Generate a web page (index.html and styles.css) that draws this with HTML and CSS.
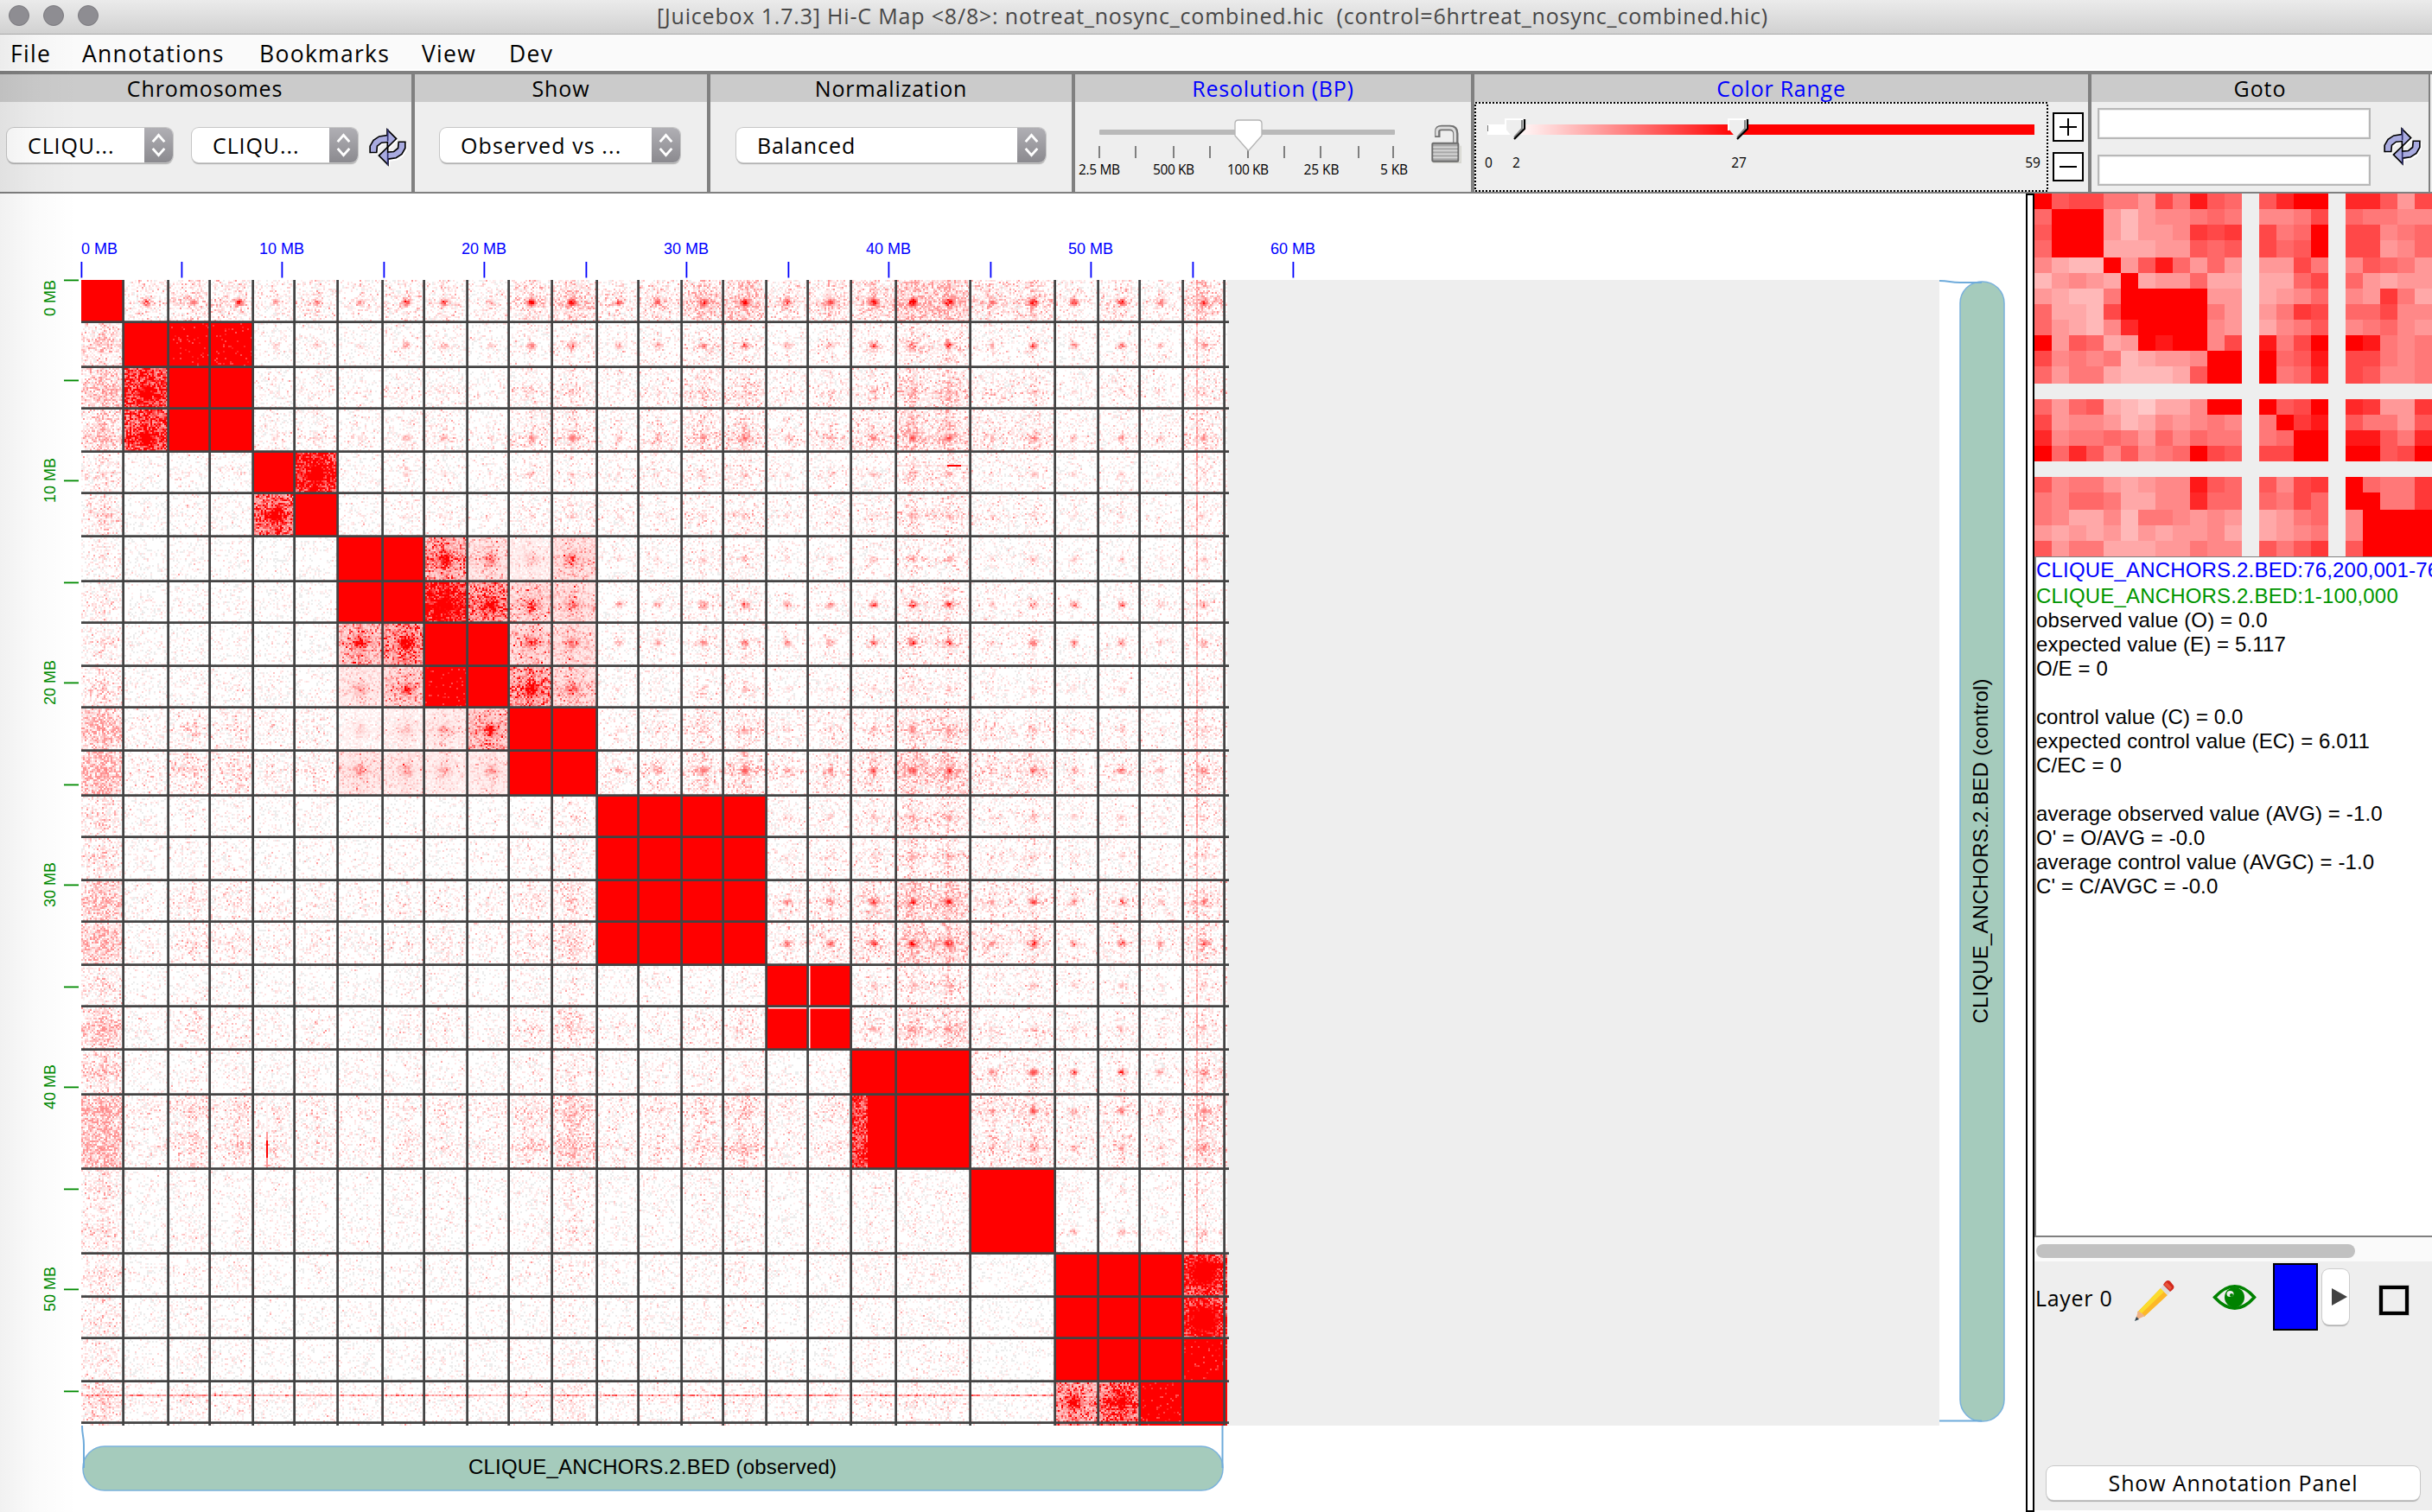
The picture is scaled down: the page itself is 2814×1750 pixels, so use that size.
FILE: index.html
```html
<!DOCTYPE html>
<html lang="en">
<head>
<meta charset="utf-8">
<title>[Juicebox 1.7.3] Hi-C Map</title>
<link rel="stylesheet" href="styles.css">
</head>
<body>
<svg class="defs" width="0" height="0">
  <symbol id="refresh" viewBox="20 20 138 136">
    <g fill="#fff"><path d="M31 113V91L46 66 66 54 91 50V31L124 64 94 94V76L71 78 56 91 54 113z"/><path d="M156 74V96L141 121 121 133 96 137V156L63 123 93 93V111L116 109 131 96 133 74z"/></g>
    <g fill="#a9abe0" stroke="#000" stroke-width="5">
      <path d="M26 106V84L38 63 58 50 86 46V26L118 58 87 88V70L66 72 51 84 49 106z"/>
      <path d="M149 69V91L137 112 117 125 89 129V149L57 117 88 87V105L109 103 124 91 126 69z"/>
    </g>
    <path d="M88 24V66M88 108V151" stroke="#2e2f6e" stroke-width="5"/>
  </symbol>
  <symbol id="updown" viewBox="0 0 34 40"><path d="M10 16l7-8 7 8M10 24l7 8 7-8" fill="none" stroke="#fff" stroke-width="3"/></symbol>
</svg>
<div class="window">
  <header class="titlebar">
    <div class="lights"><i></i><i></i><i></i></div>
    <span class="caption">[Juicebox 1.7.3] Hi-C Map &lt;8/8&gt;: notreat_nosync_combined.hic&nbsp; (control=6hrtreat_nosync_combined.hic)</span>
  </header>
  <nav class="menu"><span>File</span><span>Annotations</span><span>Bookmarks</span><span>View</span><span>Dev</span></nav>
  <div class="toolbar">
    <section class="group g-chrom">
      <h2>Chromosomes</h2>
      <div class="body">
        <div class="combo"><span>CLIQU...</span><b><svg><use href="#updown"/></svg></b></div>
        <div class="combo"><span>CLIQU...</span><b><svg><use href="#updown"/></svg></b></div>
        <svg class="refresh"><use href="#refresh"/></svg>
      </div>
    </section>
    <section class="group g-show">
      <h2>Show</h2>
      <div class="body"><div class="combo"><span>Observed vs ...</span><b><svg><use href="#updown"/></svg></b></div></div>
    </section>
    <section class="group g-norm">
      <h2>Normalization</h2>
      <div class="body"><div class="combo"><span>Balanced</span><b><svg><use href="#updown"/></svg></b></div></div>
    </section>
    <section class="group g-res">
      <h2 class="link">Resolution (BP)</h2>
      <div class="body">
        <svg class="res-slider" width="396" height="104" viewBox="0 0 396 104">
          <rect x="28" y="32" width="342" height="6" rx="1" fill="#b9b9b9"/>
          <path d="M28 51v14M70 51v14M114 51v14M156 51v14M200 51v14M242 51v14M284 51v14M328 51v14M368 51v14" stroke="#808080" stroke-width="2"/>
          <path d="M185 25q0-4 4-4h23q4 0 4 4v14l-15 17h-1l-15-17z" fill="#fff" stroke="#b4b4b4" stroke-width="1.3"/>
          <g class="tick-text"><text x="28" y="84" textLength="48">2.5 MB</text><text x="114" y="84" textLength="48">500 KB</text><text x="200" y="84" textLength="48">100 KB</text><text x="285" y="84" textLength="41">25 KB</text><text x="369" y="84" textLength="32">5 KB</text></g>
        </svg>
        <svg class="lock" width="36" height="48" viewBox="44 104 108 144">
          <path d="M54 236H150V178" fill="none" stroke="#d6d6d0" stroke-width="6"/>
          <path d="M69 149V128Q69 116 84 116H112Q132 116 132 136V168" fill="none" stroke="#707070" stroke-width="19"/>
          <path d="M69 144V128Q69 116 84 116H112Q132 116 132 136V168" transform="translate(-2 0)" fill="none" stroke="#dcdcdc" stroke-width="9"/>
          <rect x="51" y="169" width="90" height="63" rx="3" fill="#a8a8a8" stroke="#6c6c6c" stroke-width="6"/>
          <path d="M54 183H138M54 195H138M54 207H138M54 219H138" stroke="#d8d8d8" stroke-width="5"/>
        </svg>
      </div>
    </section>
    <section class="group g-color">
      <h2 class="link">Color Range</h2>
      <div class="body">
        <svg class="color-slider" width="664" height="104" viewBox="0 0 664 104">
          <defs><linearGradient id="ramp"><stop offset="0" stop-color="#fff"/><stop offset="1" stop-color="#f00"/></linearGradient></defs>
          <rect x="1" y="1" width="662" height="102" fill="none" stroke="#000" stroke-width="2" stroke-dasharray="2 2"/>
          <rect x="15" y="26" width="32" height="12" fill="#fff"/><path d="M15.500 27v7" stroke="#777"/>
          <rect x="46" y="26" width="258" height="12" fill="url(#ramp)"/><rect x="303" y="26" width="345" height="12" fill="#f00"/>
          <g id="thumb"><path d="M36 20H58V31L46 43 36 31z" fill="#eee"/><path d="M36 33V20H56" fill="none" stroke="#fff" stroke-width="2"/><path d="M55 21V31L46 41" fill="none" stroke="#888" stroke-width="2"/><path d="M58 20V31L46 43" fill="none" stroke="#000" stroke-width="2.200"/></g>
          <use href="#thumb" x="258"/>
          <g class="tick-text"><text x="16.500" y="76">0</text><text x="48.500" y="76">2</text><text x="306" y="76">27</text><text x="646" y="76">59</text></g>
        </svg>
        <div class="zoom">
          <svg width="36" height="34" viewBox="0 0 36 34"><rect x="1" y="1" width="34" height="32" fill="#fff" stroke="#000" stroke-width="2"/><path d="M18 7v20M8 17h20" stroke="#000" stroke-width="2"/></svg>
          <svg width="36" height="34" viewBox="0 0 36 34"><rect x="1" y="1" width="34" height="32" fill="#fff" stroke="#000" stroke-width="2"/><path d="M8 17h20" stroke="#000" stroke-width="2"/></svg>
        </div>
      </div>
    </section>
    <section class="group g-goto">
      <h2>Goto</h2>
      <div class="body">
        <div class="fields"><div class="field"></div><div class="field"></div></div>
        <svg class="refresh"><use href="#refresh"/></svg>
      </div>
    </section>
  </div>
  <main class="main">
    <div class="map-pane">
      <svg class="ruler-top" width="1526" height="100"></svg>
      <svg class="ruler-left" width="94" height="1326"></svg>
      <div class="map-bg"><canvas id="heatmap" width="1328" height="1326"></canvas></div>
      <svg class="track-right" width="100" height="1326" viewBox="0 0 100 1326">
        <rect x="24" y="2" width="51" height="1319" rx="25" fill="#a5cbbc" stroke="#79b1dc" stroke-width="1.500"/>
        <path d="M0 1C12 1 12 3 24 3H49M0 1320.500H49" fill="none" stroke="#6fabdb" stroke-width="2"/>
        <text transform="translate(56 661) rotate(-90)" textLength="399">CLIQUE_ANCHORS.2.BED (control)</text>
      </svg>
      <svg class="track-bottom" width="1330" height="100" viewBox="0 0 1330 100">
        <rect x="2" y="24" width="1319" height="51" rx="25" fill="#a5cbbc" stroke="#79b1dc" stroke-width="1.500"/>
        <path d="M1 0C1 12 3 12 3 22V49M1320.500 0V49" fill="none" stroke="#6fabdb" stroke-width="2"/>
        <text x="661" y="56" textLength="426">CLIQUE_ANCHORS.2.BED (observed)</text>
      </svg>
    </div>
    <div class="splitter"></div>
    <aside class="side">
      <div class="mini"><canvas id="minimap" width="460" height="420"></canvas></div>
      <div class="info">
        <p class="x">CLIQUE_ANCHORS.2.BED:76,200,001-76,300,000</p>
        <p class="y">CLIQUE_ANCHORS.2.BED:1-100,000</p>
        <p>observed value (O) = 0.0</p>
        <p>expected value (E) = 5.117</p>
        <p>O/E = 0</p>
        <p>&nbsp;</p>
        <p>control value (C) = 0.0</p>
        <p>expected control value (EC) = 6.011</p>
        <p>C/EC = 0</p>
        <p>&nbsp;</p>
        <p>average observed value (AVG) = -1.0</p>
        <p>O' = O/AVG = -0.0</p>
        <p>average control value (AVGC) = -1.0</p>
        <p>C' = C/AVGC = -0.0</p>
      </div>
      <div class="scroll"><div class="scroll-thumb"></div></div>
      <div class="layer">
        <span class="layer-name">Layer 0</span>
        <svg class="pencil" width="48" height="50" viewBox="0 0 48 50">
          <path d="M4 39L31 11 39 19 12 44 9 40z" fill="#fdb827"/><path d="M4 39L31 11 35 15 8 41z" fill="#fbdc2c"/><path d="M5 37L13 43 2 48z" fill="#efb184"/><path d="M1 49l2-5 3 3z" fill="#2f4550"/>
          <path d="M31 11L35 6 43 14 39 19z" fill="#dcdcdc"/><path d="M34 7Q38 0 42 3L46 8Q48 11 42 15z" fill="#d2281c"/><path d="M35 7l3-3 6 6-2 3z" fill="#e8543c"/>
        </svg>
        <svg class="eye" width="52" height="36" viewBox="0 0 52 36">
          <path d="M2.500 17.500Q26-8 48.500 17.500 26 43 2.500 17.500z" fill="none" stroke="#008200" stroke-width="3.500"/><circle cx="25.500" cy="17.500" r="11.500" fill="#008200"/><ellipse cx="20.500" cy="13.500" rx="4" ry="3.500" fill="#eee"/><circle cx="22" cy="15" r="2" fill="#008200"/>
        </svg>
        <div class="swatch"></div>
        <div class="more"><svg width="18" height="20" viewBox="0 0 18 20"><path d="M0 0L18 10 0 20z" fill="#424242"/></svg></div>
        <div class="box"></div>
      </div>
      <button class="annot">Show Annotation Panel</button>
    </aside>
  </main>
</div>
<script src="app.js"></script>
</body>
</html>
```
FILE: styles.css
```css
* { box-sizing: border-box; margin: 0; padding: 0; }
body { width: 2814px; height: 1750px; overflow: hidden; background: #fff; color: #000; font-family: "Open Sans", "Noto Sans", sans-serif; }
.defs { position: absolute; }
svg, canvas { display: block; flex: none; }
.window { width: 2814px; height: 1750px; display: flex; flex-direction: column; }
.window::after { content: ""; position: absolute; left: 0; top: 40px; width: 90px; height: 1710px; background: linear-gradient(90deg, rgba(0,0,0,.055), rgba(0,0,0,.02) 45%, transparent); pointer-events: none; }

.titlebar { flex: none; height: 40px; display: flex; align-items: center; padding-left: 10px; background: linear-gradient(#ebebeb, #d1d1d1); border-bottom: 1px solid #a9a9a9; }
.lights { display: flex; gap: 16px; width: 750px; margin-top: -3px; }
.lights i { width: 24px; height: 24px; border-radius: 50%; background: #8e8d92; border: 1px solid #7b7a7f; }
.caption { margin-top: -3px; font-size: 25px; line-height: 36px; letter-spacing: .82px; color: #474747; white-space: pre; }

.menu { flex: none; height: 44px; padding-left: 12px; display: grid; grid-template-columns: 83px 205px 188px 101px auto; background: #fafafa; font-size: 26.500px; line-height: 44px; letter-spacing: 1.300px; border-bottom: 2px solid #808080; box-shadow: inset 0 -2px #fff; }

.toolbar { flex: none; height: 140px; display: flex; border-top: 2px solid #808080; border-bottom: 2px solid #808080; background: #eee; }
.group { display: flex; flex-direction: column; border-right: 4px solid #808080; }
.group h2 { height: 32px; background: #cbcbcb; text-align: center; font-size: 25px; font-weight: 400; line-height: 32px; letter-spacing: .9px; }
.group h2.link { color: #00f; letter-spacing: .75px; }
.body { height: 104px; display: flex; }
.g-chrom { width: 480px; }
.g-chrom h2 { padding-right: 2px; }
.g-show { width: 342px; }
.g-norm { width: 422px; }
.g-res { width: 462px; }
.g-color { width: 714px; }
.g-goto { width: 392px; border-right-width: 2px; }
.g-chrom .body { padding: 30px 0 0 8px; gap: 22px; }
.g-show .body { padding: 30px 0 0 29px; }
.g-norm .body { padding: 30px 0 0 30px; }
.combo { display: flex; height: 40px; border-radius: 8px; background: #fff; box-shadow: 0 0 0 1px #c6c6c6, 0 2px 1px #aaa; overflow: hidden; font-size: 25px; line-height: 40px; letter-spacing: .9px; }
.combo span { flex: 1; padding-left: 24px; white-space: nowrap; }
.combo b { width: 33px; background: linear-gradient(#b0afb4, #8b8a8f); }
.combo b svg { width: 33px; height: 40px; }
.g-chrom .combo { width: 192px; }
.g-show .combo { width: 278px; letter-spacing: 1.1px; }
.g-norm .combo { width: 358px; }
.refresh { width: 46px; height: 45px; }
.g-chrom .refresh { margin-left: -10px; }
.tick-text { font-size: 15.500px; text-anchor: middle; }
.g-res .lock { margin: 26px 0 0 15px; }
.zoom { display: flex; flex-direction: column; gap: 12px; padding: 12px 0 0 5px; }
.g-goto .body { padding-left: 7px; }
.fields { display: flex; flex-direction: column; gap: 18px; padding-top: 7px; }
.field { width: 316px; height: 36px; background: #fff; border: 2px solid #b8b8b8; box-shadow: inset 0 0 0 1px #eee; }
.g-goto .refresh { margin: 29px 0 0 14px; }

.main { flex: 1; display: flex; min-height: 0; }
.map-pane { width: 2344px; display: grid; grid-template: 100px 1326px 100px / 94px 2150px 100px; }
.ruler-top { grid-area: 1 / 2; fill: #00f; overflow: visible; }
.ruler-left { grid-area: 2 / 1; fill: #008a00; overflow: visible; }
.ruler-top text, .ruler-left text { font: 18px "Liberation Sans", sans-serif; text-anchor: middle; }
.map-bg { grid-area: 2 / 2; background: #eee; }
.track-right { grid-area: 2 / 3; }
.track-bottom { grid-area: 3 / 2; }
.track-right text, .track-bottom text { font: 24px "Liberation Sans", sans-serif; text-anchor: middle; }
.splitter { width: 10px; background: #fff; border: 2px solid #000; }
.side { width: 460px; height: 1524px; display: flex; flex-direction: column; background: #eee; }
.mini { height: 421px; border-bottom: 2px solid #808080; flex: none; }
.info { flex: none; height: 787px; overflow: hidden; background: #fff; border-left: 2px solid #808080; border-bottom: 2px solid #808080; font: 24px/28px "Liberation Sans", sans-serif; letter-spacing: .12px; white-space: nowrap; }
.info .x, .info .y { line-height: 29.500px; letter-spacing: .18px; }
.info .x { color: #00f; }
.info .y { color: #009600; }
.scroll { flex: none; height: 28px; padding: 8px 0 0 2px; background: #fafafa; }
.scroll-thumb { width: 369px; height: 16px; border-radius: 8px; background: #c1c1c1; }
.layer { flex: none; height: 84px; display: flex; padding-left: 1px; }
.layer-name { width: 114px; font-size: 25px; line-height: 84px; letter-spacing: .7px; }
.pencil { margin-top: 20px; }
.eye { margin: 24px 0 0 43px; }
.swatch { width: 52px; height: 78px; margin: 2px 0 0 18px; background: #00f; border: 2px solid #000; }
.more { width: 31px; height: 64px; margin: 9px 0 0 5px; padding: 22px 0 0 11px; border-radius: 8px; background: #fff; box-shadow: 0 0 0 1px #ccc, 0 2px 1px #aaa; }
.box { width: 34px; height: 34px; margin: 28px 0 0 35px; border: 4px solid #000; box-shadow: 0 0 0 1px #c8c8c8, inset 0 0 0 1px #ccc; }
.annot { flex: none; width: 432px; height: 39px; margin: 153px 0 0 14px; border: 0; border-radius: 8px; background: #fff; box-shadow: 0 0 0 1px #c8c8c8, 0 2px 1px #aaa; font: 25px/39px "Open Sans", sans-serif; letter-spacing: .85px; color: #000; }
```
FILE: app.js
```js
// Rulers
const NS = 'http://www.w3.org/2000/svg';
const ticks = [0, 116, 232, 350, 466, 584, 700, 818, 934, 1052, 1168, 1286, 1402];
function add(parent, name, attrs, text) {
  const el = document.createElementNS(NS, name);
  for (const k in attrs) el.setAttribute(k, attrs[k]);
  if (text) el.textContent = text;
  parent.appendChild(el);
}
const top_ = document.querySelector('.ruler-top');
const left_ = document.querySelector('.ruler-left');
ticks.forEach((t, i) => {
  add(top_, 'rect', { x: t - .5, y: 79, width: 1.8, height: 18.5 });
  if (t < 1326) add(left_, 'rect', { x: 74, y: t - .5, width: 17, height: 1.8 });
  if (i % 2) return;
  const label = i * 5 + ' MB';
  const c = i ? t : 21;
  add(top_, 'text', { x: c, y: 70 }, label);
  if (t < 1326) add(left_, 'text', { transform: `translate(64 ${c}) rotate(-90)` }, label);
});

// Contact map: 25 anchors, 2px bins
const edges = [0, 49, 101, 149, 199, 247, 297, 349, 397, 447, 495, 545, 597, 645, 695, 743, 793, 841, 891, 943, 1029, 1127, 1177, 1225, 1275, 1326];
const centers = [25, 75, 129, 182, 224, 272, 322, 375, 419, 473, 520, 567, 621, 666, 719, 767, 816, 866, 916, 961, 1101, 1148, 1203, 1248, 1298];
const upCol = [0, .4, .6, .6, .3, .4, .3, .45, .45, .3, .7, .85, .4, .6, .95, 1.1, .5, .7, .85, 1.45, .75, .4, .5, .35, .8];
const upRow = [1.3, .45, .65, .85, .4, .45, .3, .35, .4, .3, .6, .9, .5, .5, .9, .9, .45, .6, .75, 1.05, .4, .4, .3, .3, .3];
const spotCol = [0, 1, .5, .9, .4, .5, .4, .9, .8, .4, 1.1, 1.3, .7, .7, .9, 1.2, .8, .8, 1.2, 1.5, 1.3, .9, 1.1, .5, .9];
const spotRow = [1.7, 1, .2, .7, .35, .25, .45, 1.2, 1, .3, .35, .9, .35, .3, 1, 1.2, .35, .4, 1.3, .8, .6, .3, .3, .3, .3];
const loCol = [2.3, .35, .7, .65, .4, .4, .3, .4, .45, .35, .7, 1.15, .4, .5, .7, .85, .35, .5, .8, .9, .15, .3, .3, .3, .3];
const loRow = [0, .4, .6, .5, .25, .3, .15, .2, .2, .3, .75, .95, .3, .3, .65, .7, .25, .55, .4, .95, .3, .25, .2, .2, .4];
const solid = {};
const fill = (a, b) => { for (let r = a; r <= b; r++) for (let c = a; c <= b; c++) solid[r + ',' + c] = 9; };
fill(0, 0); fill(1, 3); fill(4, 5); fill(6, 9); fill(10, 11); fill(12, 15); fill(16, 17); fill(18, 19); fill(20, 20); fill(21, 24);
// Blocks with partial coverage: mean level inside the block
Object.assign(solid, {
  '1,2': 2, '1,3': 2.2, '2,1': .95, '3,1': .85, '4,5': 1.2, '5,4': .7,
  '6,8': .42, '6,9': .16, '7,8': 1.2, '7,9': .55, '8,6': .32, '8,7': .5, '9,8': 2.2, '9,6': .11, '9,7': .24,
  '21,24': 1, '22,24': 1.1, '23,24': 4, '24,21': .45, '24,22': .7, '24,23': 2,
  '6,10': .08, '6,11': .18, '7,10': .22, '7,11': .17, '8,10': .22, '8,11': .16, '9,10': .46, '9,11': .2, '10,9': .3,
  '10,6': .05, '10,7': .07, '10,8': .1, '11,6': .13, '11,7': .11, '11,8': .09, '11,9': .1
});
let seed = 20177;
function rnd() {
  seed = (seed + 0x6D2B79F5) | 0;
  let t = Math.imul(seed ^ (seed >>> 15), 1 | seed);
  t = (t + Math.imul(t ^ (t >>> 7), 61 | t)) ^ t;
  return ((t ^ (t >>> 14)) >>> 0) / 4294967296;
}
const index = p => { let i = 0; while (i < 24 && p >= edges[i + 1]) i++; return i; };
const ctx = document.getElementById('heatmap').getContext('2d');
ctx.fillStyle = '#fff';
ctx.fillRect(0, 0, 1326, 1326);
function dist(p, i) {
  let d = Math.abs(p - centers[i]);
  if (i === 19) d = Math.min(d, Math.abs(p - 1003));
  if (i === 20) d = Math.min(d, Math.abs(p - 1053) + 3);
  return d;
}
for (let y = 0; y < 1326; y += 2) {
  const r = index(y + 1);
  for (let x = 0; x < 1326; x += 2) {
    const c = index(x + 1);
    const dx = dist(x, c), dy = dist(y, r);
    const cross = Math.exp(-dx / 8) + Math.exp(-dy / 8);
    const a = 1 - rnd(), b = 1 - rnd();
    let level = solid[r + ',' + c];
    let v;
    if (level === 9) v = 1;
    else if (level >= 2) v = b < .07 ? .65 + .25 * a : 1;
    else if (level !== undefined) {
      level *= .75 + .45 * cross;
      v = level * (.4 + .65 * -Math.log(a));
      v += Math.min(1, level * 2) * Math.exp(-(dx * dx / 45 + dy * dy / 40)) * (.2 + b);
      if (c === 24) v += .8 * Math.max(0, 1 - Math.max(dx, dy) / 20);
    } else {
      const up = c > r;
      level = (up ? upCol[c] * upRow[r] : loCol[c] * loRow[r]) * (.5 + .8 * cross);
      const p = Math.min(.85, .08 + .5 * level);
      v = b < p ? .05 + (.045 + .14 * level) * -Math.log(a) * .8 : 0;
      v = Math.min(v, .42);
      const s = up ? spotCol[c] * spotRow[r] : loCol[c] * loRow[r] * .14;
      v += s * .62 * Math.exp(-(dx * dx / 18 + dy * dy / 13)) * (.15 + 1.1 * a);
    }
    if (r === 19 && c === 18 && x < 909) v = .35 + a * .8;
    if (r === 15 && c === 12 && y > 825 && x < 622) v = .55 + a * 1.6;
    if (x === 1290 && r < 21) v = Math.max(v, .15 + .3 * a);
    if (y === 1290 && c < 21) v = Math.max(v, .2 + .6 * a * a);
    if (y === 214 && c === 19) v = x > 1000 && x < 1018 ? 1 : .22 * a;
    if (x === 214 && r === 19) v = y > 994 && y < 1016 ? 1 : y > 985 ? .4 : .05;
    if (v < .035) {
      if (rnd() > .12) continue;
      ctx.fillStyle = '#ededed';
    } else {
      const k = Math.round(255 * (1 - Math.min(1, v)));
      ctx.fillStyle = `rgb(255,${k},${k})`;
    }
    ctx.fillRect(x, y, 2, 2);
  }
}
ctx.fillStyle = '#fff';
ctx.fillRect(842, 793, 1.5, 98);
ctx.fillRect(795, 842, 96, 1.5);
ctx.fillStyle = '#434343';
for (const e of edges.slice(1, 25).concat(1323)) {
  ctx.fillRect(e - 1.75, 0, 2.75, 1326);
  ctx.fillRect(0, e - 1.75, 1328, 2.75);
}

// Overview matrix: each digit is the green/blue level, '.' is no data
const rows = [
  '054477947156.5200.22594', '60009b988767.8874.67788', '50009b998343.4760.44876', '6000aaa99565.4650.44986',
  '8abb09516969.9947.85679', 'b989a0a996aa.aa64.69a99', '9abb70000099.a986.8937a', '6aab40000079.9734.66488',
  '69ab82000089.a875.87689', '0956a9010084.1740.01787', '48787ba99800.0651.44787', '6977abbba500.0762.45887',
  '.......................', '6965abcaa800.0540.23993', '49889ba89878.7031.57795', '287767968677.7600.11572',
  '062585876045.4400.00540', '.......................', '58779a988156.5843.06773', '78667aa88266.6746.00773',
  '78aa8b778989.a976.80000', '9a9a9b9a998a.a987.80000', '5977aaa99788.5753.50000'
];
const ys = [0, 18, 36, 54, 74, 92, 110, 128, 146, 164, 182, 200, 220, 238, 256, 274, 292, 310, 328, 346, 366, 384, 402, 420];
const mini = document.getElementById('minimap').getContext('2d');
rows.forEach((row, r) => [...row].forEach((ch, c) => {
  const n = parseInt(ch, 16);
  const k = n ? n * 16 + 8 : 0;
  mini.fillStyle = ch === '.' ? '#eee' : `rgb(255,${k},${k})`;
  mini.fillRect(c * 20, ys[r], 20, ys[r + 1] - ys[r]);
}));
```
